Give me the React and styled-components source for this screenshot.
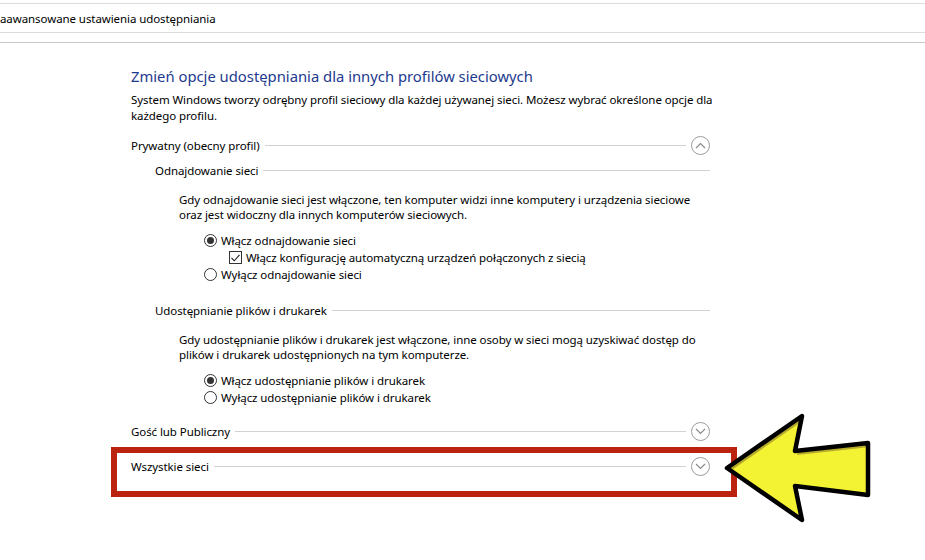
import React from 'react'
import styled, { createGlobalStyle } from 'styled-components'

const GlobalStyle = createGlobalStyle`
  body {
    margin: 0;
    background: #fff;
    font-family: "Noto Sans", "Open Sans", sans-serif;
    font-size: 11.5px;
    letter-spacing: -0.08px;
    color: #000;
  }
`

const Page = styled.div`
  position: relative;
  width: 925px;
  height: 560px;
  overflow: hidden;
  background: #fff;
`

const AddressBar = styled.div`
  margin-top: 3px;
  height: 28px;
  display: flex;
  align-items: center;
  border-top: 1px solid #dcdcdc;
  border-bottom: 1px solid #dcdcdc;
  white-space: nowrap;
`

const Rule = styled.div`
  margin-top: 9px;
  border-top: 1px solid #c6c6c6;
`

const Content = styled.div`
  width: 579px;
  margin-left: 131px;
`

const Title = styled.h1`
  margin: 23px 0 0;
  font-size: 14.8px;
  line-height: 20px;
  letter-spacing: 0;
  font-weight: normal;
  color: #1e3a8e;
`

const Text = styled.p`
  margin: ${p => p.top || 0}px ${p => (p.wide ? -10 : 0)}px 0
    ${p => p.indent || 0}px;
  line-height: ${p => p.lh || 16}px;
`

const Row = styled.div`
  display: flex;
  align-items: center;
  height: 20px;
  margin-top: ${p => p.top || 0}px;
  padding-left: ${p => p.indent || 0}px;
`

const Line = styled.div`
  flex: 1;
  height: 1px;
  margin-left: 5px;
  background: #d2d2d2;
`

const Toggle = styled.div`
  width: 17px;
  height: 17px;
  margin-left: 5px;
  border: 1px solid #9c9c9c;
  border-radius: 50%;
  display: flex;
  align-items: center;
  justify-content: center;
`

const Options = styled.div`
  margin-top: ${p => p.top || 0}px;
`

const Option = styled.label`
  display: flex;
  align-items: center;
  height: 17px;
  padding-left: ${p => p.indent || 73}px;
`

const Radio = styled.span`
  box-sizing: border-box;
  width: 13px;
  height: 13px;
  margin-right: 4px;
  border: 1px solid #333;
  border-radius: 50%;
  display: flex;
  align-items: center;
  justify-content: center;

  &::after {
    content: '';
    width: 7px;
    height: 7px;
    border-radius: 50%;
    background: ${p => (p.checked ? '#333' : 'transparent')};
  }
`

const Check = styled.span`
  box-sizing: border-box;
  width: 13px;
  height: 13px;
  margin-right: 4px;
  border: 1px solid #333;
  display: flex;
  align-items: center;
  justify-content: center;
`

const Highlight = styled.div`
  position: relative;
`

const Frame = styled.div`
  position: absolute;
  left: -20px;
  right: -27px;
  top: -9px;
  height: 50px;
  box-sizing: border-box;
  border: 6px solid #bb2210;
  pointer-events: none;
`

const Arrow = styled.svg`
  position: absolute;
  left: 715px;
  top: 405px;
`

const Chevron = ({ up }) => (
  <svg width="11" height="7" viewBox="0 0 11 7">
    <path
      d={up ? 'M1 6 L5.5 1.5 L10 6' : 'M1 1 L5.5 5.5 L10 1'}
      fill="none"
      stroke="#8a8a8a"
      strokeWidth="1.2"
    />
  </svg>
)

const Section = ({ label, up, indent, top }) => (
  <Row top={top} indent={indent}>
    <span>{label}</span>
    <Line />
    {!indent && (
      <Toggle>
        <Chevron up={up} />
      </Toggle>
    )}
  </Row>
)

const ARROW = '12,63 87,11 80,46 153,38 153,90 80,81 87,115'

const App = () => {
  return (
    <Page>
      <GlobalStyle />
      <AddressBar>aawansowane ustawienia udostępniania</AddressBar>
      <Rule />
      <Content>
        <Title>Zmień opcje udostępniania dla innych profilów sieciowych</Title>
        <Text top={6} wide>
          System Windows tworzy odrębny profil sieciowy dla każdej używanej
          sieci. Możesz wybrać określone opcje dla każdego profilu.
        </Text>

        <Section label="Prywatny (obecny profil)" up top={11} />
        <Section label="Odnajdowanie sieci" indent={24} top={5} />
        <Text top={12} indent={48} lh={15}>
          Gdy odnajdowanie sieci jest włączone, ten komputer widzi inne komputery
          i urządzenia sieciowe oraz jest widoczny dla innych komputerów
          sieciowych.
        </Text>
        <Options top={10}>
          <Option>
            <Radio checked />
            Włącz odnajdowanie sieci
          </Option>
          <Option indent={98}>
            <Check>
              <svg width="9" height="8" viewBox="0 0 9 8">
                <path d="M0.5 4 L3.3 6.8 L8.5 0.8" fill="none" stroke="#222" strokeWidth="1.1" />
              </svg>
            </Check>
            Włącz konfigurację automatyczną urządzeń połączonych z siecią
          </Option>
          <Option>
            <Radio />
            Wyłącz odnajdowanie sieci
          </Option>
        </Options>

        <Section label="Udostępnianie plików i drukarek" indent={24} top={17} />
        <Text top={12} indent={48} lh={15}>
          Gdy udostępnianie plików i drukarek jest włączone, inne osoby w sieci
          mogą uzyskiwać dostęp do plików i drukarek udostępnionych na tym
          komputerze.
        </Text>
        <Options top={10}>
          <Option>
            <Radio checked />
            Włącz udostępnianie plików i drukarek
          </Option>
          <Option>
            <Radio />
            Wyłącz udostępnianie plików i drukarek
          </Option>
        </Options>

        <Section label="Gość lub Publiczny" top={15} />
        <Highlight>
          <Section label="Wszystkie sieci" top={15} />
          <Frame />
        </Highlight>
      </Content>

      <Arrow width="170" height="125" viewBox="0 0 170 125">
        <defs>
          <clipPath id="arrow-clip">
            <polygon points={ARROW} />
          </clipPath>
        </defs>
        <g clipPath="url(#arrow-clip)">
          <polygon points={ARROW} fill="#b5ab2c" />
          <polygon points={ARROW} fill="#f3f333" transform="translate(2 4)" />
        </g>
        <polygon
          points={ARROW}
          fill="none"
          stroke="#000"
          strokeWidth="4.5"
          strokeLinejoin="round"
        />
      </Arrow>
    </Page>
  )
}

export default App
